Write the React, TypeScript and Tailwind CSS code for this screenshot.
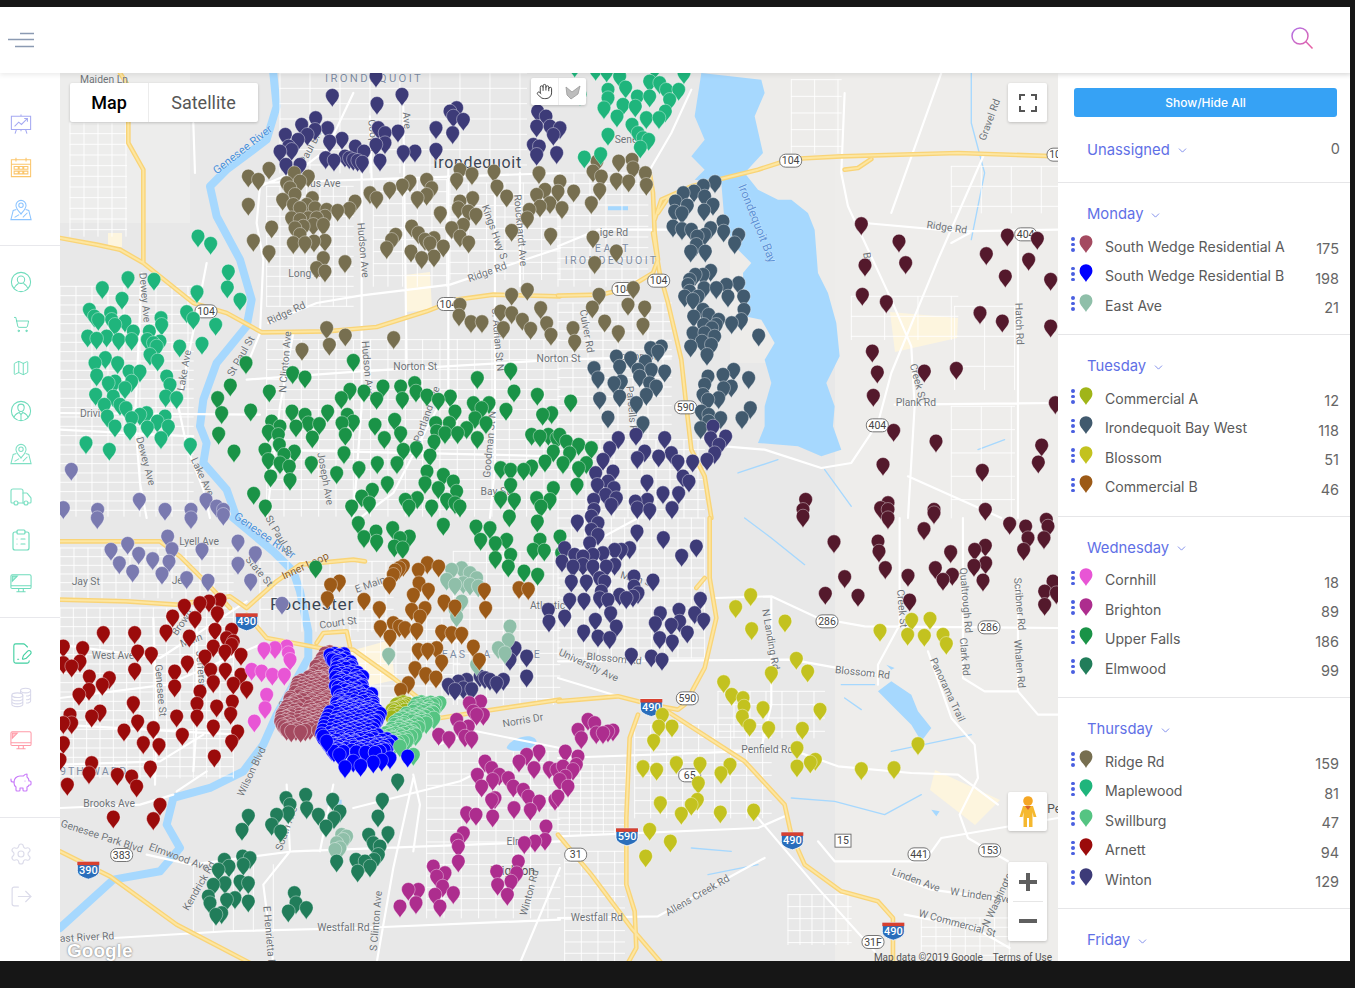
import React from 'react';
import {
  ChevronDown,
  ClipboardList,
  FilePenLine,
  Hand,
  LogOut,
  MapIcon,
  PiggyBank,
  Settings,
  ShoppingCart,
  Truck,
} from 'lucide-react';

type Quad = 'A' | 'B' | 'C' | 'D';

const QUADS: Record<Quad, [number, number]> = {
  A: [60, 73],
  B: [558, 73],
  C: [60, 518],
  D: [558, 518],
};

const COLORS = {
  winton: '#3d3b78',
  ridge: '#776f50',
  maple: '#1fb57c',
  upper: '#1a9347',
  lilac: '#7a7ab0',
  bay: '#415a6e',
  maroon: '#54192c',
  arnett: '#9b0b0b',
  cornhill: '#e855d5',
  wedgeA: '#a44a60',
  wedgeB: '#0000ff',
  swill: '#55c482',
  commA: '#a0b518',
  east: '#8fbfa9',
  commB: '#9c5a17',
  brighton: '#ad2d8e',
  elm: '#217d5a',
  blossom: '#c3c21f',
};

const PIN_DATA: [string, Quad, string][] = [
  [COLORS.lilac, 'A', '34,1225 238,1315 315,1345 438,1315 470,1335 113,1345 393,1345 490,1345 10,1340'],
  [COLORS.lilac, 'C', '112,35 393,35 490,25 203,112 153,130 236,142 278,158 178,170 218,195 306,202 327,165 336,128 323,90 426,130 380,215 444,223 534,105 586,140 534,172 572,222 666,292'],
  [COLORS.winton, 'A', '817,103 948,45 951,127 1026,100 1128,200 1178,215 1210,175 1170,150 1190,140 1180,165 1128,265 676,220 725,190 767,170 742,220 765,205 803,200 714,235 660,270 695,265 686,255 678,310 720,310 809,240 846,232 797,290 822,297 855,285 868,290 880,295 893,298 907,303 886,255 912,270 948,250 955,200 975,215 975,245 960,297 1014,210 1030,272 1065,270 1433,150 1458,165 1430,195 1480,220 1470,195 1420,250 1438,255 1430,280 1490,275 1500,200'],
  [COLORS.ridge, 'A', '565,345 595,355 627,322 565,430 580,538 635,498 627,572 680,365 703,335 720,360 745,345 668,415 705,400 690,380 757,410 700,430 720,440 740,430 765,440 800,445 833,448 868,442 885,420 695,470 720,475 745,470 770,470 795,465 705,500 730,495 760,490 790,490 700,545 735,545 762,540 795,538 720,520 790,590 770,620 795,630 855,602 930,395 950,410 989,382 1027,372 1050,360 1072,410 1100,400 1115,380 1100,355 1141,455 1190,355 1200,325 1236,338 1302,330 1311,375 1340,405 1402,470 1355,508 1472,520 1437,335 1430,400 1440,435 1408,445 1470,425 1500,360 1455,385 1200,420 1238,410 1195,440 1225,450 1248,460 1175,500 1200,525 1210,490 1226,543 1007,520 995,535 980,560 1055,495 1075,515 1053,570 1085,590 1122,585 1150,555 1122,530 1095,535 1110,545 1355,700 1402,685 1442,740 1200,730 1197,762 1233,782 1266,782 1322,750 1355,755 1387,775 1330,800 1412,802 1460,785 1473,820 800,800 856,822 808,850 1001,830 726,865'],
  [COLORS.ridge, 'B', '117,300 47,390 12,440 0,390 100,425 182,300 222,295 175,355 105,330 125,385 130,345 212,360 225,320 265,370 262,335 105,528 175,570 110,605 123,700 226,680 210,730 103,738 260,738 140,780 181,812 255,790 45,800 50,840'],
  [COLORS.maple, 'A', '414,525 452,547 505,630 502,678 540,715 411,692 282,655 204,650 127,680 186,712 88,745 103,765 115,775 152,755 155,775 165,790 195,780 83,825 110,832 140,825 176,835 215,835 220,810 268,810 305,790 303,770 380,752 400,772 467,790 426,847 359,855 262,835 280,845 300,840 290,855 270,880 293,897 136,890 105,905 173,905 110,942 207,930 240,930 215,960 195,980 165,960 145,965 320,945 330,970 317,1005 350,1010 107,1000 133,1030 160,1005 180,1030 198,1040 142,1065 165,1095 215,1070 240,1060 260,1055 210,1105 262,1098 292,1080 315,1065 325,1095 303,1130 391,1150 78,1145 148,1165'],
  [COLORS.maple, 'B', '50,15 113,25 146,30 150,85 150,110 185,45 203,78 238,105 275,105 275,60 305,65 325,85 335,115 362,85 378,35 290,20 138,140 195,130 177,165 232,135 265,170 222,190 303,170 322,150 150,220 247,258 255,230 272,235 240,215 79,288 128,278 66,100'],
  [COLORS.upper, 'A', '558,905 511,972 628,990 698,935 735,948 880,898 1352,925 1252,950 473,1010 485,1055 572,1047 476,1117 522,1170 581,1297 616,1335 696,1050 735,1060 708,1095 778,1088 803,1050 745,1085 757,1128 625,1110 635,1080 660,1095 655,1120 658,1150 615,1165 625,1195 660,1205 672,1180 703,1170 688,1215 632,1245 690,1255 754,1205 830,1235 897,1220 952,1205 1011,1205 852,1175 856,1120 846,1085 862,1060 880,1080 844,1010 870,985 912,990 969,975 950,1012 1022,975 1064,965 1068,990 1027,1012 1101,1002 1135,1015 1171,1005 945,1090 1004,1075 1022,1115 973,1130 1030,1165 1069,1160 1110,1182 1122,1140 1130,1110 1127,1085 1155,1115 1193,1115 1220,1100 1168,1085 1185,1050 1252,1130 1278,1085 1245,1070 1240,1025 1265,1040 1287,1025 1338,1045 1362,990 1432,1000 1448,1060 1475,1055 1322,1220 1352,1225 1391,1225 1415,1215 1455,1200 1480,1170 1415,1120 1440,1125 1465,1120 1490,1130 1480,1280 1352,1270 1322,1310 1363,1315 1430,1310 1443,1335 1470,1315 982,1265 937,1285 905,1305 928,1325 875,1335 1036,1315 1072,1310 1047,1335 1095,1265 1101,1230 1150,1240 1180,1260 1190,1290 1135,1280 1160,1315 1115,1335 1185,1325 1200,1335'],
  [COLORS.upper, 'B', '38,1020 5,1120 62,1150 100,1160 25,1140 35,1175 15,1205 62,1220 85,1205 57,1270'],
  [COLORS.upper, 'C', '767,183 895,50 912,92 950,105 948,75 998,65 1003,120 1020,95 1028,125 1048,90 1150,55 1248,60 1262,100 1290,65 1306,110 1306,155 1345,180 1352,145 1340,100 1392,195 1433,205 1420,130 1453,132 1440,100 1348,30 1432,45 1500,90 1505,140'],
  [COLORS.bay, 'B', '471,362 436,373 408,390 376,395 352,420 388,432 438,447 465,430 440,405 350,450 372,455 345,495 372,503 400,505 418,525 440,520 458,500 497,510 495,480 530,545 542,520 398,570 442,570 415,550 458,628 435,640 412,640 395,655 390,670 395,690 380,705 405,715 420,705 438,680 475,680 505,670 510,705 542,665 557,705 558,745 550,775 521,785 482,775 407,765 435,745 452,760 437,790 462,800 405,815 475,790 440,815 470,825 398,855 447,880 460,850 432,840 602,822 218,890 310,855 300,870 278,860 320,930 280,925 262,900 240,925 245,945 295,975 265,1000 275,965 185,915 175,885 190,960 168,965 185,1005 120,950 108,920 125,1012 235,1025 150,1068 255,1085 450,945 495,940 527,925 520,975 497,980 572,950 440,970 435,1000 482,1010 450,1015 430,1050 452,1060 577,1040 552,1070 488,1070 428,1100 452,1080'],
  [COLORS.winton, 'B', '181,1130 234,1120 320,1130 155,1160 260,1170 238,1190 302,1185 135,1195 340,1175 360,1200 404,1200 447,1195 470,1175 483,1150 458,1130 503,1125 465,1095 113,1235 165,1230 150,1260 118,1270 168,1280 267,1260 375,1245 393,1260 362,1295 315,1295 143,1300 175,1310 107,1315 232,1320 268,1315 160,1330 108,1345 342,1340 275,1345 238,1340'],
  [COLORS.winton, 'C', '1465,310 1467,345 1365,425 1400,450 1350,460 1400,510 1165,535 1195,525 1220,520 1185,550 1235,548 1260,510 1275,515 1290,520 1310,530 1330,520 1210,545'],
  [COLORS.winton, 'D', '58,45 100,30 120,50 237,75 316,95 415,120 371,148 285,222 228,210 240,260 225,270 205,275 185,265 427,277 20,330 35,280 78,280 150,280 125,275 130,255 215,125 190,130 170,130 135,140 105,145 75,150 50,145 20,125 12,165 120,85 100,70 95,110 45,180 75,175 105,180 145,180 170,175 40,225 85,225 125,215 140,225 228,240 158,320 112,340 175,360 77,375 120,390 155,395 307,320 292,350 363,310 340,355 365,345 410,320 437,340 388,378 305,395 343,405 220,445 280,450 312,460'],
  [COLORS.maroon, 'B', '910,488 1023,540 921,612 1043,605 913,700 985,722 1348,522 1285,578 1438,532 1412,595 1342,645 1478,655 1266,755 1333,780 1478,795 943,870 958,933 1099,930 1195,922 946,1003 1007,1108 1134,1140 975,1210 1273,1228 1451,1152 1441,1203 1492,1025 743,1315 990,1325 968,1340 1282,1345 1128,1345 735,1345 990,1345'],
  [COLORS.maroon, 'D', '735,30 990,35 1098,68 1128,20 1355,52 1403,60 1465,40 1470,60 1458,95 1410,95 1397,130 1282,118 1250,130 1178,137 1248,178 1283,170 1275,222 1132,185 1155,220 1183,205 1050,208 982,185 963,135 960,105 828,107 860,212 802,262 900,268 1055,282 1460,295 1460,255 1485,225 1495,260'],
  [COLORS.arnett, 'C', '373,298 338,330 420,290 447,285 480,280 472,320 405,335 318,375 388,390 130,380 224,380 233,435 274,442 224,490 465,370 515,370 500,395 520,405 460,420 495,435 515,415 543,445 435,450 382,468 344,495 344,540 452,490 496,490 460,527 543,505 520,532 560,545 420,555 411,592 517,585 470,600 411,630 512,622 350,630 460,660 533,675 515,705 463,750 367,685 233,645 220,590 148,515 127,535 88,510 87,550 57,565 10,420 68,425 60,465 35,480 10,470 120,615 95,630 30,625 35,650 10,650 192,672 280,665 250,710 297,716 10,710 0,760 95,770 87,800 172,805 271,783 215,810 230,840 22,835 300,895 280,938 160,933'],
  [COLORS.cornhill, 'C', '612,428 645,425 680,420 685,440 690,460 575,490 605,495 637,505 673,505 620,565 615,605 583,645'],
  [COLORS.east, 'C', '1175,190 1205,185 1230,200 1250,215 1160,220 1185,235 1210,230 1230,235 1255,240 1205,285 1185,310 1190,330 986,445 1350,360 1345,400 1315,425 1335,440 1250,475'],
  [COLORS.commB, 'C', '838,225 812,235 802,275 912,280 958,305 961,362 1005,192 1030,178 1018,185 1000,205 988,232 1075,190 1102,170 1136,180 1105,250 1077,230 1060,265 1055,310 1095,305 1080,330 1070,370 1000,350 1018,360 1035,365 990,390 1152,285 1273,250 1277,305 1377,245 1405,248 1185,300 1145,375 1175,380 1205,382 1240,420 1075,430 1103,430 1130,425 1145,465 1065,485 1097,503 1128,513 1045,530 1022,550 1258,460'],
  [COLORS.brighton, 'C', '1228,590 1262,585 1240,615 1270,625 1250,625 1190,640 1136,685 1167,695 1200,665 1215,690 1235,695 1225,660 1437,735 1400,745 1377,765 1422,785 1468,785 1490,790 1275,765 1295,785 1252,805 1318,805 1298,820 1265,840 1345,815 1360,840 1390,850 1405,870 1295,880 1305,875 1438,885 1411,910 1362,905 1485,880 1220,920 1248,925 1298,930 1458,960 1393,1010 1425,1005 1455,1000 1210,980 1190,1000 1195,1020 1195,1065 1120,1080 1155,1100 1130,1110 1148,1140 1125,1165 1180,1160 1140,1200 1075,1150 1045,1150 1068,1190 1020,1200 1375,1065 1310,1095 1370,1100 1353,1125 1313,1135 1342,1165'],
  [COLORS.brighton, 'D', '60,670 90,640 115,680 110,650 135,680 150,675 165,672 70,695 22,735 60,750 55,775 45,790 22,810 30,840 5,820 0,870 15,780'],
  [COLORS.east, 'C', '845,985 830,1010 825,1030 850,1000 860,990 840,1025'],
  [COLORS.elm, 'C', '1013,822 565,928 546,970 635,955 650,925 662,975 678,875 685,920 690,895 737,865 740,905 775,925 798,960 822,935 818,880 840,915 967,880 954,930 984,980 926,985 830,1065 888,1060 893,1095 915,1065 930,1080 942,1060 955,1045 960,1020 940,1010 493,1060 507,1080 475,1090 548,1050 570,1055 550,1075 495,1130 540,1125 460,1135 565,1130 565,1185 500,1180 525,1175 445,1170 450,1190 468,1225 485,1220 703,1160 708,1190 685,1215 739,1205'],
  [COLORS.blossom, 'D', '578,266 533,302 581,368 681,345 715,457 640,500 749,495 497,527 521,565 555,575 558,600 553,630 575,658 615,605 632,665 786,610 733,667 717,725 717,780 757,768 772,760 910,788 1008,785 1080,713 966,373 1061,340 1116,337 1049,385 1099,388 1155,385 1165,412 313,625 302,660 342,660 287,703 255,782 296,790 355,770 426,772 516,775 489,800 421,830 418,880 400,895 370,922 307,890 487,918 587,912 275,970 337,1005 263,1050'],
];

const DENSE: [string, [number, number, number][]][] = [
  [COLORS.wedgeA, [[440, 790, 805], [480, 770, 825], [510, 760, 830], [530, 715, 835], [560, 700, 835], [590, 690, 835], [620, 670, 835], [645, 665, 820], [672, 680, 800]]],
  [COLORS.commA, [[590, 1010, 1045], [610, 1000, 1040], [632, 995, 1005]]],
  [COLORS.swill, [[590, 1065, 1140], [615, 1060, 1130], [640, 1010, 1110], [665, 1000, 1080], [690, 960, 1065], [715, 950, 1020]]],
  [COLORS.wedgeB, [[445, 805, 860], [475, 830, 880], [505, 830, 900], [535, 830, 915], [565, 840, 930], [595, 830, 945], [620, 815, 975], [650, 800, 955], [680, 790, 950], [710, 800, 1005], [735, 825, 975]]],
];

const DENSE_EXTRA: [string, string][] = [
  [COLORS.swill, '1060,745 1020,720'],
  [COLORS.wedgeB, '1043,750 990,755 965,762 940,768 855,782 902,778 880,765 838,745 800,705 790,690'],
];

const PIN_PATH = 'M0 0C-1.5-3.800-6.800-7.200-6.800-12A6.800 6.800 0 1 1 6.800-12C6.800-7.200 1.500-3.800 0 0Z';

function parsePins(quad: Quad, raw: string) {
  const [ox, oy] = QUADS[quad];
  return raw
    .split(' ')
    .map((p) => p.split(',').map(Number))
    .map(([x, y]) => [ox + x / 3, oy + y / 3])
    .sort((a, b) => a[1] - b[1]);
}

// rows are in the C quadrant's zoom units; fill between them with a little scatter
function denseZoomPins(rows: [number, number, number][]) {
  const [ox, oy] = QUADS.C;
  const out: number[][] = [];
  let n = 0;
  rows.forEach(([y, x0, x1], i) => {
    const next = rows[i + 1] ?? [y + 1, x0, x1];
    for (let t = 0; t < 3; t++) {
      const k = t / 3;
      if (next[0] === y + 1 && t > 0) break;
      const yy = y + (next[0] - y) * k;
      const a = x0 + (next[1] - x0) * k;
      const b = x1 + (next[2] - x1) * k;
      for (let x = a; x <= b; x += 15) {
        n += 1;
        out.push([ox + (x + ((n * 7919) % 11) - 5) / 3, oy + (yy + ((n * 104729) % 9) - 4) / 3]);
      }
    }
  });
  return out.sort((p, q) => p[1] - q[1]);
}

function PinSet({ color, pins, width }: { color: string; pins: number[][]; width: number }) {
  return (
    <g fill={color} stroke="#fff" strokeWidth={width} strokeOpacity={0.85}>
      {pins.map(([x, y], j) => (
        <path key={j} d={PIN_PATH} transform={`translate(${x} ${y})`} />
      ))}
    </g>
  );
}

function Pins() {
  return (
    <g>
      {PIN_DATA.map(([color, quad, raw], i) => (
        <PinSet key={i} color={color} pins={parsePins(quad, raw)} width={0.45} />
      ))}
      {DENSE.map(([color, rows], i) => (
        <PinSet key={i} color={color} pins={denseZoomPins(rows)} width={color === COLORS.wedgeB ? 0.6 : 0.5} />
      ))}
      {DENSE_EXTRA.map(([color, raw], i) => (
        <PinSet key={i} color={color} pins={parsePins('C', raw)} width={0.45} />
      ))}
    </g>
  );
}

function hatch(x0: number, y0: number, x1: number, y1: number, dx: number, dy: number) {
  let d = '';
  if (dx) for (let x = x0; x <= x1; x += dx) d += `M${x} ${y0}V${y1}`;
  if (dy) for (let y = y0; y <= y1; y += dy) d += `M${x0} ${y}H${x1}`;
  return d;
}

const STREETS: Record<Quad, { major: string; minor: string; highway: string }> = {
  A: {
    highway: 'M0 495L110 515L180 530L250 570L400 690L500 720L605 778L800 775L950 762L1100 715L1190 680L1300 665L1500 670M180 0L205 40L205 210L250 290L250 570',
    major: 'M625 750L770 690L900 668L1170 635L1500 525M560 880L600 780L610 560L590 450L600 340L720 290L800 230L880 60M440 570L415 700L355 1000L380 1120L430 1250L450 1335M245 600L240 720L225 1040L240 1230L260 1335M700 780L660 1000L620 1335M905 300L905 1000L880 1335M1165 290L1165 1000M930 130L935 320M1030 100L1040 880M1305 300L1305 1180L1290 1335M560 920L900 895L1500 860M600 330L1500 300M0 1020L600 1025M0 1070L400 1090M600 1130L1500 1150M1135 1000L1000 1260L900 1335M400 150L405 300M1380 300L1380 640',
    minor:
      hatch(0, 640, 400, 1330, 48, 28) + hatch(620, 340, 880, 700, 40, 30) + hatch(940, 320, 1160, 640, 44, 36) + hatch(1170, 330, 1500, 620, 55, 34) + hatch(620, 800, 1500, 1330, 52, 30) + hatch(30, 150, 200, 490, 42, 32) + hatch(660, 0, 1400, 300, 90, 46),
  },
  B: {
    highway: 'M0 668L130 665L210 645L285 600L300 560L290 480L285 360L275 300M285 480L305 600L330 690L370 860L385 1000L400 1130L440 1210L460 1335M290 440L310 380L400 340L600 290L700 258L850 250L1200 240L1500 250M300 420L330 375L420 345M860 290L900 285L940 258',
    major: 'M0 520L120 470L500 470M270 300L340 180L400 50M860 60L850 300L870 400L1000 680L1060 820L1070 1000L1050 1335M1380 480L1380 1335M920 450L1200 475L1500 470M1280 240L1140 560L1000 900L960 1050L880 1170L790 1185L620 1130L500 1120M1010 995L1500 990M0 860L340 850M1235 480L1180 510M1050 1210L1330 1335M1150 0L1000 420',
    minor:
      hatch(0, 690, 340, 1100, 45, 28) + hatch(0, 300, 270, 640, 48, 32) + hatch(700, 20, 850, 240, 70, 50) + hatch(1180, 280, 1500, 420, 90, 60) + hatch(1180, 1000, 1370, 1335, 90, 70) + hatch(0, 1100, 440, 1335, 42, 30) + hatch(1190, 700, 1370, 950, 90, 90) + hatch(880, 670, 1200, 800, 100, 60),
  },
  C: {
    highway: 'M0 70L300 70L360 115L450 205L510 270M0 245L200 250L350 260L510 235L560 270L650 190L720 140L880 125L915 130M560 290L620 360L780 390L880 395L1000 480L1100 560L1140 600L1300 575L1500 545M770 375L790 345L860 340L870 385M0 1000L150 1075L350 1220L570 1335',
    major: 'M0 380L300 420L560 250M0 540L320 500L600 380M0 620L350 640L540 650M280 300L290 600L285 800M410 290L410 620L400 760M0 740L300 730L430 650M0 870L240 860L340 830M260 1010L395 1040L700 1000L1500 970M0 1270L500 1240L900 1230L1500 1205M440 760L350 820M680 800L690 1000L610 1100L640 1335M880 870L1200 790L1300 740M1060 780L1000 1050L950 1335M1500 1050L1380 1335M820 800L780 1000M1060 770L1080 860L1060 1000M1135 680L1250 640M1250 640L1500 690',
    minor:
      hatch(0, 90, 520, 240, 42, 26) + hatch(0, 270, 520, 780, 40, 28) + hatch(600, 130, 1000, 340, 42, 36) + hatch(870, 300, 1200, 560, 46, 34) + hatch(1180, 100, 1500, 560, 50, 34) + hatch(1100, 700, 1500, 1200, 52, 34) + hatch(400, 1040, 640, 1240, 60, 0),
  },
  D: {
    highway: 'M455 0L455 180L475 300L440 450L380 560L360 575L280 560L180 535L0 550M320 575L560 730L680 860L700 950L740 1040L850 1120L960 1150L1005 1200L1005 1335M240 590L215 660L205 900L205 1100L230 1180L235 1290L210 1335M0 950L100 1070L220 1230L310 1335M440 180L415 210',
    major: 'M0 430L700 425L950 470M470 240L640 235L780 300L920 325L1500 330M640 240L640 560L610 690M0 720L700 695L840 745L1060 765L1200 770L1320 860M0 955L600 930L680 895M1215 0L1215 480L1280 520L1380 520L1440 590L1500 590M1380 180L1380 520M1025 0L1025 320L960 440L960 500M1110 400L1180 600L1250 680L1260 780L1205 890L1230 960L1350 1030M780 970L830 1030L1100 1030L1150 960L1355 925L1500 900M1000 1070L1120 1115L1340 1145M0 1200L300 1195L620 1020M1040 1190L1250 1230L1355 1290M600 900L770 1100L950 1300M240 0L0 130M0 480L230 550',
    minor: hatch(0, 0, 440, 420, 40, 30) + hatch(480, 520, 800, 660, 48, 40) + hatch(230, 620, 640, 900, 48, 38) + hatch(0, 740, 210, 950, 34, 20) + hatch(20, 1000, 200, 1335, 50, 34) + hatch(690, 1130, 880, 1280, 36, 36) + hatch(1090, 1200, 1355, 1335, 44, 28),
  },
};

const WATER: Record<Quad, { fill?: string; river?: string }> = {
  A: { river: 'M640 0L650 100L620 200L500 290L450 340L470 430L540 560L575 680L560 760L470 870L430 980L420 1060L440 1110L430 1170L500 1250L530 1335' },
  B: {
    fill: 'M430 0L610 20L620 60L590 130L615 240L560 300L600 350L660 380L700 380L750 420L770 470L780 600L810 660L835 750L845 850L805 930L830 1000L825 1060L850 1130L790 1150L720 1120L600 1110L620 1060L620 1000L640 930L620 860L650 810L610 740L560 730L555 600L580 570L530 520L500 450L490 330L410 320L440 290L400 250L440 200L410 130Z M150 400H210V412H150Z',
    river: 'M1240 0L1240 150L1280 300L1240 500M540 1200L660 1160M800 1190L880 1300M1260 1130L1340 1100',
  },
  C: {
    river: 'M520 0L640 100L700 160L720 220L745 340L745 420L650 590L610 680L550 760L450 810L340 840L320 920L360 990L300 1060L160 1085L0 1230',
    fill: 'M1340 690C1350 660 1420 640 1430 670C1420 700 1360 710 1340 690Z M800 845H845V860H800Z',
  },
  D: {
    fill: 'M960 520L1000 490L1060 530L1080 580L1120 630L1090 670L1060 620L1000 560Z M985 440L1010 450L1000 455Z M1120 875L1145 880L1135 895Z',
    river: 'M560 0L640 60L740 140M850 500L950 500M860 540L910 575M700 840L830 850L980 890L1090 830M1240 650L1000 700M450 1070L600 1040M400 990L520 1000',
  },
};

type Label = [string, number, number, number?, number?, string?, number?];

const LABELS: Record<Quad, Label[]> = {
  A: [
    ['Maiden Ln', 60, 30],
    ['Genesee River', 470, 305, -38, 34, '#4a90d9'],
    ['IRONDEQUOIT', 795, 28, 0, 34, '#7d8ca3', 7],
    ['Irondequoit', 1120, 284, 0, 48, '#3c4654', 2],
    ['Paul Blvd', 735, 275, -62],
    ['Ave', 1028, 118, 85],
    ['Cooper', 925, 140, 85],
    ['Ridge Rd', 628, 755, -25],
    ['Ridge Rd', 1228, 628, -20],
    ['Long A', 685, 612],
    ['Hudson Ave', 892, 450, 85],
    ['Hudson Ave', 905, 805, 85],
    ['Dewey Ave', 238, 600, 85],
    ['Dewey Ave', 228, 1095, 75],
    ['Lake Ave', 372, 955, -80],
    ['Lake Ave', 392, 1160, 65],
    ['St Paul St', 518, 912, -60],
    ['N Clinton Ave', 678, 960, -85],
    ['Norton St', 1000, 890],
    ['Norton St', 1430, 868],
    ['Joseph Ave', 772, 1140, 80],
    ['Portland Ave', 1080, 1110, -70],
    ['C. Adrian St N', 1295, 705, 85],
    ['Goodman St N', 1290, 1215, -85],
    ['Bay St', 1262, 1265],
    ['Drivin', 60, 1032],
    ['Rouckhardt Ave', 1362, 365, 85],
    ['Kings Hwy S', 1265, 400, 70],
    ['us Ave', 750, 342],
  ],
  B: [
    ['Irondequoit Bay', 540, 340, 68, 36, '#5c92d6'],
    ['Ridge Rd', 1105, 465, 8],
    ['Sene', 170, 210],
    ['Gravel Rd', 1282, 205, -70],
    ['Hatch Rd', 1372, 690, 88],
    ['Plank Rd', 1013, 998],
    ['Creek St', 1055, 875, 75],
    ['Culver Rd', 65, 712, 80],
    ['EAST', 110, 538, 0, 32, '#7d8ca3', 8],
    ['IRONDEQUOIT', 20, 574, 0, 32, '#7d8ca3', 7],
    ['ige Rd', 125, 490],
    ['Br', 915, 540, 80],
    ['Parsells Rd', 205, 940, 85],
    ['Norton St', 165, 860],
  ],
  C: [
    ['Lyell Ave', 358, 80],
    ['Jay St', 35, 202],
    ['West Ave', 95, 422],
    ['Brooks Ave', 70, 866],
    ['Genesee Park Blvd', 0, 925, 18],
    ['Genesee River', 520, 0, 35, 34, '#4a90d9'],
    ['Rochester', 630, 277, 0, 52, '#3c4654', 2],
    ['Inner Loop', 672, 185, -25, 32, '#8a5a1e'],
    ['E Main St', 890, 225, -20],
    ['Court St', 780, 332, -8],
    ['Wilson Blvd', 550, 838, -65],
    ['South Ave', 665, 1000, -70],
    ['Elmwood Ave', 265, 995, 20],
    ['Kendrick Rd', 385, 1180, -60],
    ['E Henrietta Rd', 610, 1165, 85],
    ['S Clinton Ave', 950, 1300, -85],
    ['Westfall Rd', 772, 1238],
    ['ast River Rd', 0, 1272, -3],
    ['Winton Rd', 1400, 1195, -75],
    ['Brighton', 1290, 1072, 0, 36, '#555'],
    ['Atlantic', 1410, 272],
    ['Norris Dr', 1330, 628, -10],
    ['9TH WARD', 0, 772, 0, 32, '#7d8ca3', 6],
    ['Genesee St', 285, 440, 85],
    ['Jefferson', 408, 400, 85],
    ['S', 655, 572, 0, 32, '#7d8ca3'],
    ['E', 932, 572, 0, 32, '#7d8ca3'],
    ['EAS', 1145, 420, 0, 32, '#7d8ca3', 6],
    ['A', 1270, 420, 0, 32, '#7d8ca3'],
    ['UE', 1395, 420, 0, 32, '#7d8ca3', 6],
    ['State St', 555, 125, 50],
    ['St Paul St', 615, 0, 60],
    ['Elm', 1340, 980],
    ['Jeff', 335, 198],
    ['Brown', 350, 355, -55],
    ['Main', 365, 388, -20],
  ],
  D: [
    ['Blossom Rd', 85, 425, 5],
    ['Blossom Rd', 830, 465, 6],
    ['University Ave', 0, 410, 25],
    ['N Landing Rd', 612, 275, 80],
    ['Penfield Rd', 550, 705],
    ['Panorama Trail', 1115, 425, 65],
    ['Clark Rd', 1205, 360, 85],
    ['Qualtrough Rd', 1205, 150, 85],
    ['Creek St', 1017, 215, 85],
    ['Scribner Rd', 1368, 180, 85],
    ['Whalen Rd', 1368, 365, 85],
    ['Linden Ave', 1000, 1070, 20],
    ['W Linden Ave', 1175, 1130, 8],
    ['W Commercial St', 1080, 1195, 15],
    ['N Washington', 1290, 1230, -65],
    ['Allens Creek Rd', 330, 1195, -30],
    ['Westfall Rd', 38, 1208],
    ['Main St', 185, 180, 15],
    ['Pe', 1468, 885, 0, 36, '#555'],
  ],
};

const SHIELDS: [Quad, string, number, number, 'state' | 'interstate' | 'square'][] = [
  ['A', '104', 438, 715, 'state'],
  ['A', '104', 1165, 693, 'state'],
  ['B', '104', 698, 263, 'state'],
  ['B', '104', 195, 648, 'state'],
  ['B', '104', 302, 623, 'state'],
  ['B', '590', 383, 1003, 'state'],
  ['B', '404', 958, 1057, 'state'],
  ['B', '404', 1403, 484, 'state'],
  ['B', '104', 1500, 245, 'state'],
  ['C', '383', 185, 1011, 'state'],
  ['D', '286', 807, 310, 'state'],
  ['D', '286', 1293, 328, 'state'],
  ['D', '590', 388, 541, 'state'],
  ['D', '65', 395, 772, 'state'],
  ['D', '441', 1083, 1009, 'state'],
  ['D', '153', 1295, 997, 'state'],
  ['D', '31', 53, 1010, 'state'],
  ['D', '31F', 945, 1272, 'state'],
  ['D', '15', 855, 968, 'square'],
  ['C', '490', 560, 310, 'interstate'],
  ['C', '390', 85, 1055, 'interstate'],
  ['D', '490', 280, 567, 'interstate'],
  ['D', '590', 207, 955, 'interstate'],
  ['D', '490', 703, 967, 'interstate'],
  ['D', '490', 1006, 1238, 'interstate'],
];

function quadTransform(q: Quad) {
  return `translate(${QUADS[q][0]} ${QUADS[q][1]}) scale(0.3333)`;
}

const QUAD_KEYS: Quad[] = ['A', 'B', 'C', 'D'];

function Shield({ quad, text, x, y, kind }: { quad: Quad; text: string; x: number; y: number; kind: string }) {
  const cx = QUADS[quad][0] + x / 3;
  const cy = QUADS[quad][1] + y / 3;
  if (kind === 'interstate') {
    return (
      <g transform={`translate(${cx} ${cy})`}>
        <path d="M-11-8H11V1C11 6 5 8 0 9.5C-5 8-11 6-11 1Z" fill="#2a6ebb" stroke="#fff" strokeWidth={0.8} />
        <path d="M-11-8H11V-4.500H-11Z" fill="#d8402f" />
        <text y={4} textAnchor="middle" fontSize={11} fontWeight={500} fill="#fff">{text}</text>
      </g>
    );
  }
  return (
    <g transform={`translate(${cx} ${cy})`}>
      <rect
        x={kind === 'square' ? -8 : -11}
        y={-6.5}
        width={kind === 'square' ? 16 : 22}
        height={13}
        rx={kind === 'square' ? 0 : 6}
        fill="#fff"
        stroke="#666"
        strokeWidth={0.9}
      />
      <text y={3.7} textAnchor="middle" fontSize={10.5} fill="#444">{text}</text>
    </g>
  );
}

function BaseMap() {
  return (
    <svg viewBox="60 73 998 888" className="block h-full w-full" style={{ fontFamily: 'Roboto, sans-serif' }}>
      <rect x={60} y={73} width={998} height={888} fill="#e8e8e8" />
      <rect x={835} y={73} width={223} height={888} fill="#eeedeb" />
      <rect x={730} y={73} width={105} height={290} fill="#edecea" />
      <rect x={60} y={73} width={130} height={150} fill="#ededec" />
      <g fill="#fdf5de">
        <rect x={108} y={233} width={14} height={14} />
        <path d="M405 275L430 272L432 310L405 312Z" />
        <path d="M890 312L958 318L957 338L895 352Z" />
        <path d="M336 655L390 640L395 680L350 690Z" />
        <path d="M935 770L1000 800L975 825L930 790Z" />
      </g>
      {QUAD_KEYS.map((q) => (
        <g key={q} transform={quadTransform(q)} fill="none" strokeLinejoin="round" strokeLinecap="round">
          {WATER[q].fill && <path d={WATER[q].fill} fill="#a6d8fe" />}
          {WATER[q].river && (
            <path d={WATER[q].river} stroke="#a6d8fe" strokeWidth={q === 'B' || q === 'D' ? 4 : 24} />
          )}
          <path d={STREETS[q].minor} stroke="#fff" strokeWidth={3} strokeOpacity={0.9} />
          <path d={STREETS[q].major} stroke="#fff" strokeWidth={6.500} />
        </g>
      ))}
      {QUAD_KEYS.map((q) => (
        <g key={q} transform={quadTransform(q)} fill="none" strokeLinejoin="round" strokeLinecap="round">
          <path d={STREETS[q].highway} stroke="#f9d477" strokeWidth={14} />
          <path d={STREETS[q].highway} stroke="#fde6a1" strokeWidth={6} />
        </g>
      ))}
      {QUAD_KEYS.map((q) => (
        <g key={q} transform={quadTransform(q)} fontSize={31} fill="#6e7378">
          {LABELS[q].map(([text, x, y, rot, size, color, spacing], i) => (
            <text
              key={i}
              x={x}
              y={y}
              fontSize={size}
              fill={color}
              letterSpacing={spacing}
              transform={rot ? `rotate(${rot} ${x} ${y})` : undefined}
              stroke="#ffffff"
              strokeOpacity={0.5}
              strokeWidth={2}
              paintOrder="stroke"
            >
              {text}
            </text>
          ))}
        </g>
      ))}
      {SHIELDS.map(([q, text, x, y, kind], i) => (
        <Shield key={i} quad={q} text={text} x={x} y={y} kind={kind} />
      ))}
      <Pins />
    </svg>
  );
}

function MapControls() {
  return (
    <>
      <div className="absolute left-[10px] top-[10px] flex h-[39px] w-[188px] rounded-[2px] bg-white text-[18px] shadow-[0_1px_3px_rgba(0,0,0,0.2)] [font-family:Roboto,sans-serif]">
        <div className="flex w-[79px] items-center justify-center border-r border-[#ececec] font-medium text-black">Map</div>
        <div className="flex flex-1 items-center justify-center text-[#565656]">Satellite</div>
      </div>
      <div className="absolute left-[471px] top-[5px] flex h-[27px] w-[55px] rounded-[2px] bg-white shadow-[0_1px_3px_rgba(0,0,0,0.2)]">
        <div className="flex flex-1 items-center justify-center border-r border-[#eee]">
          <Hand size={17} strokeWidth={1.4} className="text-[#444]" />
        </div>
        <div className="flex flex-1 items-center justify-center">
          <svg width="18" height="16" viewBox="0 0 18 16">
            <path d="M2 3L8 8L16 2L14 10L7 15L3 11Z" fill="#bdbdbd" stroke="#999" strokeWidth={0.8} />
          </svg>
        </div>
      </div>
      <div className="absolute left-[948px] top-[10px] flex h-[39px] w-[39px] items-center justify-center rounded-[2px] bg-white shadow-[0_1px_3px_rgba(0,0,0,0.2)]">
        <svg width="18" height="18" viewBox="0 0 18 18" fill="none" stroke="#555" strokeWidth={2}>
          <path d="M1 6V1H6M12 1H17V6M17 12V17H12M6 17H1V12" />
        </svg>
      </div>
      <div className="absolute left-[948px] top-[719px] flex h-[39px] w-[39px] items-center justify-center rounded-[2px] bg-white shadow-[0_1px_3px_rgba(0,0,0,0.2)]">
        <svg width="18" height="32" viewBox="0 0 18 32">
          <circle cx="9" cy="5" r="4.800" fill="#f5a623" />
          <path d="M4 10H14L17.500 21L14.500 21L13.500 16V31H10V22H8V31H4.500V16L3.500 21L0.500 21Z" fill="#f5b82e" />
          <path d="M6 10L9 14L12 10Z" fill="#d9622b" />
        </svg>
      </div>
      <div className="absolute left-[948px] top-[789px] flex h-[79px] w-[39px] flex-col items-center rounded-[2px] bg-white shadow-[0_1px_3px_rgba(0,0,0,0.2)]">
        <div className="flex h-[39px] w-full items-center justify-center">
          <svg width="18" height="18" viewBox="0 0 18 18">
            <path d="M7 0H11V7H18V11H11V18H7V11H0V7H7Z" fill="#5f5f5f" />
          </svg>
        </div>
        <div className="h-px w-[30px] bg-[#e6e6e6]" />
        <div className="flex flex-1 items-center justify-center">
          <svg width="18" height="5" viewBox="0 0 18 5">
            <rect width="18" height="4" fill="#5f5f5f" />
          </svg>
        </div>
      </div>
      <div
        className="absolute bottom-[1px] left-[7px] text-[19px] font-bold leading-none text-white [font-family:'Liberation_Sans',sans-serif]"
        style={{ textShadow: '0 0 2px rgba(0,0,0,0.6)' }}
      >
        Google
      </div>
      <div className="absolute bottom-[-4px] right-[6px] flex gap-[10px] text-[10px] text-[#555] [font-family:Roboto,sans-serif]">
        <span>Map data ©2019 Google</span>
        <span>Terms of Use</span>
      </div>
    </>
  );
}

type IconProps = { size?: number; strokeWidth?: number; className?: string };

function LineIcon({ size = 22, strokeWidth = 1.1, className, children }: IconProps & { children: React.ReactNode }) {
  return (
    <svg width={size} height={size} viewBox="0 0 24 24" fill="none" stroke="currentColor" strokeWidth={strokeWidth} className={className}>
      {children}
    </svg>
  );
}

function BoardIcon(p: IconProps) {
  return (
    <LineIcon {...p}>
      <path d="M1.500 3.500H22.500V18H1.500ZM12 1.500V3.500M7 18L5.500 22.500M17 18L18.500 22.500M12 18V20" />
      <path d="M5 14.500L9.500 10L12.500 12.500L18.500 6.500M15.500 6H19V9.500" />
    </LineIcon>
  );
}

function CalendarIcon(p: IconProps) {
  return (
    <LineIcon {...p}>
      <path d="M1.500 4H22.500V22.500H1.500ZM1.500 9H22.500M6.500 2V6M17.500 2V6" />
      <path d="M4.500 11.500H9V14.500H4.500ZM10 11.500H14V14.500H10ZM15 11.500H19.500V14.500H15ZM4.500 16.500H9V19.500H4.500ZM10 16.500H14V19.500H10ZM15 16.500H19.500V19.500H15Z" />
    </LineIcon>
  );
}

function PinMapIcon(p: IconProps) {
  return (
    <LineIcon {...p}>
      <path d="M12 16.500C9 12.500 6.500 10 6.500 7A5.500 5.500 0 0 1 17.500 7C17.500 10 15 12.500 12 16.500Z" />
      <circle cx="12" cy="6.800" r="2.400" />
      <path d="M7 11.500L3.500 12.500L1 22.500H23L20.500 12.500L17 11.500M5 20L10 17M14 20L19 15" />
    </LineIcon>
  );
}

function AccountIcon(p: IconProps) {
  return (
    <LineIcon {...p}>
      <circle cx="12" cy="12" r="10.500" />
      <circle cx="12" cy="9.500" r="4" />
      <path d="M4.500 19C5.500 15.500 8 14.500 9.500 13.500M19.500 19C18.500 15.500 16 14.500 14.500 13.500" />
    </LineIcon>
  );
}

function SuitIcon(p: IconProps) {
  return (
    <LineIcon {...p}>
      <circle cx="12" cy="12" r="10.500" />
      <path d="M8.500 7.500C9 3.500 15 3.500 15.500 7.500C15.500 10.500 14 12.500 12 12.500C10 12.500 8.500 10.500 8.500 7.500Z" />
      <path d="M4.500 19C5 15.500 8 14.500 10 13.500L12 16L14 13.500C16 14.500 19 15.500 19.500 19M12 16V22.500" />
    </LineIcon>
  );
}

function ScreenIcon(p: IconProps) {
  return (
    <LineIcon {...p}>
      <path d="M2.500 3H21.500Q23 3 23 4.500V16.500Q23 18 21.500 18H2.500Q1 18 1 16.500V4.500Q1 3 2.500 3ZM1 15H23M9.500 18V21M14.500 18V21M7 21.500H17" />
      <path d="M2.500 4.500H8L2.500 10Z" fill="currentColor" fillOpacity={0.5} />
    </LineIcon>
  );
}

function StackIcon(p: IconProps) {
  return (
    <LineIcon {...p}>
      <ellipse cx="17" cy="5" rx="5.500" ry="2.500" />
      <path d="M22.500 5V16C22.500 17.500 20 18.500 17.500 18.500M11.500 5V8M22.500 8.500C22.500 10 20 11 17.500 11M22.500 12.500C22.500 14 20 15 17.500 15" />
      <ellipse cx="8" cy="10" rx="6" ry="2.500" />
      <path d="M2 10V20C2 21.500 5 22.500 8 22.500S14 21.500 14 20V10M2 13.500C2 15 5 16 8 16S14 15 14 13.500M2 17C2 18.500 5 19.500 8 19.500S14 18.500 14 17" />
    </LineIcon>
  );
}

const NAV_GROUPS: { pad: string; items: { Icon: React.ComponentType<IconProps>; color: string; size?: number }[] }[] = [
  {
    pad: 'pt-[29px] pb-[14px]',
    items: [
      { Icon: BoardIcon, color: 'text-[#a5a9f2]' },
      { Icon: CalendarIcon, color: 'text-[#fbc66c]' },
      { Icon: PinMapIcon, color: 'text-[#8cc4ff]' },
    ],
  },
  {
    pad: 'pt-[14px] pb-[13px]',
    items: [
      { Icon: AccountIcon, color: 'text-[#6fdcbc]' },
      { Icon: ShoppingCart, color: 'text-[#4fd3ac]', size: 17 },
      { Icon: MapIcon, color: 'text-[#5fd8b4]', size: 18 },
      { Icon: SuitIcon, color: 'text-[#6fdcbc]' },
      { Icon: PinMapIcon, color: 'text-[#7fe0c4]' },
      { Icon: Truck, color: 'text-[#7fe0c4]', size: 24 },
      { Icon: ClipboardList, color: 'text-[#6fdcbc]', size: 24 },
      { Icon: ScreenIcon, color: 'text-[#6fdcbc]' },
    ],
  },
  {
    pad: 'pt-[14px] pb-[13px]',
    items: [
      { Icon: FilePenLine, color: 'text-[#3fcfa0]', size: 23 },
      { Icon: StackIcon, color: 'text-[#d8d8ea]' },
      { Icon: ScreenIcon, color: 'text-[#ff9aa8]' },
      { Icon: PiggyBank, color: 'text-[#c97bfa]', size: 24 },
    ],
  },
  {
    pad: 'pt-[14px]',
    items: [
      { Icon: Settings, color: 'text-[#dcdcea]', size: 24 },
      { Icon: LogOut, color: 'text-[#dcdcea]', size: 25 },
    ],
  },
];

function Sidebar() {
  return (
    <aside className="flex w-[60px] shrink-0 flex-col divide-y divide-[#e8e8ec] bg-white">
      {NAV_GROUPS.map((group, i) => (
        <div key={i} className={group.pad}>
          {group.items.map(({ Icon, color, size }, j) => (
            <div key={j} className="flex h-[43px] w-[42px] items-center justify-center">
              <Icon size={size ?? 22} strokeWidth={1.15} className={color} />
            </div>
          ))}
        </div>
      ))}
    </aside>
  );
}

type Route = { name: string; count: number; color: string };
type Day = { day: string; routes: Route[] };

const DAYS: Day[] = [
  {
    day: 'Monday',
    routes: [
      { name: 'South Wedge Residential A', count: 175, color: COLORS.wedgeA },
      { name: 'South Wedge Residential B', count: 198, color: COLORS.wedgeB },
      { name: 'East Ave', count: 21, color: COLORS.east },
    ],
  },
  {
    day: 'Tuesday',
    routes: [
      { name: 'Commercial A', count: 12, color: COLORS.commA },
      { name: 'Irondequoit Bay West', count: 118, color: COLORS.bay },
      { name: 'Blossom', count: 51, color: COLORS.blossom },
      { name: 'Commercial B', count: 46, color: COLORS.commB },
    ],
  },
  {
    day: 'Wednesday',
    routes: [
      { name: 'Cornhill', count: 18, color: COLORS.cornhill },
      { name: 'Brighton', count: 89, color: COLORS.brighton },
      { name: 'Upper Falls', count: 186, color: COLORS.upper },
      { name: 'Elmwood', count: 99, color: COLORS.elm },
    ],
  },
  {
    day: 'Thursday',
    routes: [
      { name: 'Ridge Rd', count: 159, color: COLORS.ridge },
      { name: 'Maplewood', count: 81, color: COLORS.maple },
      { name: 'Swillburg', count: 47, color: COLORS.swill },
      { name: 'Arnett', count: 94, color: COLORS.arnett },
      { name: 'Winton', count: 129, color: COLORS.winton },
    ],
  },
];

function DayTitle({ label }: { label: string }) {
  return (
    <div className="flex h-5 items-center gap-[6px] pl-[29px] text-[14.8px] text-[#5f70e6]">
      {label}
      <ChevronDown size={13} strokeWidth={1.4} className="mt-px" />
    </div>
  );
}

function RouteRow({ route }: { route: Route }) {
  return (
    <div className="flex h-[29.5px] items-center pl-[13px] pr-[11px]">
      <div className="mb-[4px] flex w-[4px] flex-col gap-[2px]">
        <span className="h-[3.5px] w-[3.5px] rounded-full bg-[#4a5fe0]" />
        <span className="h-[3.5px] w-[3.5px] rounded-full bg-[#4a5fe0]" />
        <span className="h-[3.5px] w-[3.5px] rounded-full bg-[#4a5fe0]" />
      </div>
      <svg width="14" height="18" viewBox="-7 -19 14 19" className="mb-[5px] ml-[4px]">
        <path d={PIN_PATH} fill={route.color} />
      </svg>
      <span className="ml-[12px] flex-1 truncate text-[14.1px] text-[#5a5a5a]">{route.name}</span>
      <span className="mt-[6px] text-[#666]">{route.count}</span>
    </div>
  );
}

function RoutesPanel() {
  return (
    <aside className="w-[292px] shrink-0 divide-y divide-[#e6e6e8] overflow-hidden bg-white text-[14.5px] [font-family:Inter,sans-serif]">
      <div className="h-[110px] pt-[15px] shadow-[inset_0_6px_6px_-6px_rgba(0,0,0,0.12)]">
        <button type="button" className="ml-[16px] block h-[29px] w-[263px] rounded-[3px] bg-[#36a2f5] pt-px text-[12px] font-medium text-white">
          Show/Hide All
        </button>
        <div className="mt-[23px] flex items-center justify-between pr-[10px]">
          <DayTitle label="Unassigned" />
          <span className="-mt-[2px] text-[#666]">0</span>
        </div>
      </div>
      {DAYS.map((d) => (
        <section key={d.day} className="pb-[14px] pt-[21.5px]">
          <DayTitle label={d.day} />
          <div className="mt-[7px]">
            {d.routes.map((r) => (
              <RouteRow key={r.name} route={r} />
            ))}
          </div>
        </section>
      ))}
      <section className="pt-[21.5px]">
        <DayTitle label="Friday" />
      </section>
    </aside>
  );
}

function TopBar() {
  return (
    <header className="relative z-10 flex h-[66px] shrink-0 items-center justify-between bg-white pl-[8px] pr-[36px] shadow-[0_2px_5px_rgba(0,0,0,0.08)]">
      <svg width="26" height="16" viewBox="0 0 26 16" fill="none" stroke="#8b9ab2" strokeWidth={1.3}>
        <path d="M12 1.500H26M0 7.500H26M7 14.500H26" />
      </svg>
      <svg width="24" height="24" viewBox="0 0 24 24" fill="none" strokeWidth={1.5} className="-mt-[4px]">
        <defs>
          <linearGradient id="searchGrad" x1="0" y1="0" x2="1" y2="1">
            <stop offset="0" stopColor="#b06fe6" />
            <stop offset="1" stopColor="#ea5fa0" />
          </linearGradient>
        </defs>
        <path d="M10 2a8 8 0 1 0 0 16a8 8 0 0 0 0-16ZM16 15.800L22.500 22.500" stroke="url(#searchGrad)" />
      </svg>
    </header>
  );
}

export default function App() {
  return (
    <div className="h-[988px] w-[1355px] overflow-hidden bg-[#161616] pb-[27px] pr-[5px] pt-[7px]">
      <div className="flex h-full flex-col overflow-hidden bg-white">
        <TopBar />
        <div className="flex min-h-0 flex-1">
          <Sidebar />
          <main className="relative w-[998px] shrink-0 overflow-hidden">
            <BaseMap />
            <MapControls />
          </main>
          <RoutesPanel />
        </div>
      </div>
    </div>
  );
}
